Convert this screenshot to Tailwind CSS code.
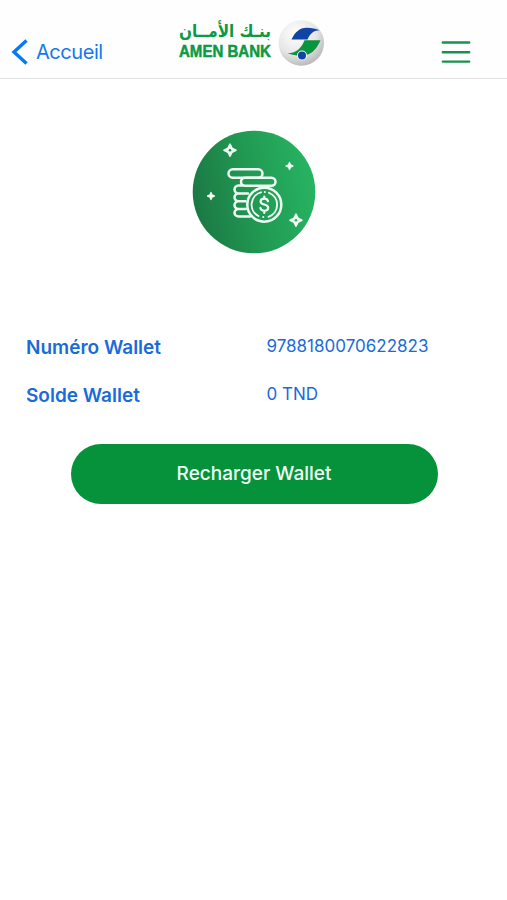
<!DOCTYPE html>
<html lang="fr">
<head>
    <meta charset="UTF-8">
    <meta name="viewport" content="width=device-width, initial-scale=1.0">
    <title>Amen Bank - Wallet</title>
    <script src="https://cdn.jsdelivr.net/npm/@tailwindcss/browser@4"></script>
</head>
<body class="bg-white font-['Inter',sans-serif] min-h-screen">
    <header class="flex h-[79px] border-b border-[#e2e2e2] bg-[#fefefe]">
        <a href="#" class="flex items-center w-[176px] pl-[11px] pt-[25px] gap-[7px] text-[#1479ee]">
            <svg class="w-[18px] h-[28px] shrink-0" viewBox="0 0 18 28" fill="none" stroke="#0878f5" stroke-width="3.400">
                <path d="M15.500 2.500 3 14l12.500 11.500" />
            </svg>
            <span class="text-[20px] leading-6 tracking-[-0.45px]">Accueil</span>
        </a>
        <svg class="w-[152px] h-[54px] mt-4 shrink-0" viewBox="0 0 152 54">
            <defs>
                <radialGradient id="globe" cx=".38" cy=".3" r=".75">
                    <stop offset="0" stop-color="#fff" />
                    <stop offset=".6" stop-color="#e6e6e6" />
                    <stop offset="1" stop-color="#b5b5b5" />
                </radialGradient>
            </defs>
            <text x="95" y="21" direction="rtl" textLength="92" lengthAdjust="spacingAndGlyphs" font-family="DejaVu Sans" font-weight="700" font-size="17.500" fill="#0b9a43">بنـك الأمــان</text>
            <text x="3" y="40.500" textLength="92" lengthAdjust="spacingAndGlyphs" font-family="Liberation Sans" font-weight="700" font-size="16.500" fill="#0b9a43" stroke="#0b9a43" stroke-width=".5">AMEN BANK</text>
            <circle cx="125.300" cy="27" r="22.700" fill="url(#globe)" />
            <path d="M115.500 23.500C119 16 124 11.500 131 11.800c5 .1 9 .9 12.500 2.400C137 14.500 134 18 131.500 23.500z" fill="#1145a5" />
            <path d="M128.500 24.200H144.500C142 30 138.500 35.500 133 38c-6 2.500-14 1.800-21.500-.5C121 36.500 125.500 32 128.500 24.200z" fill="#0b9440" />
            <circle cx="126" cy="39.500" r="5" fill="#f5f5f5" />
            <circle cx="126" cy="39.500" r="4" fill="#1145a5" />
        </svg>
        <button class="ml-auto mr-[36px] mt-[40px] h-[24px] w-[30px]">
            <svg class="w-[30px] h-[24px]" viewBox="0 0 30 24" stroke="#16924c" stroke-width="2.400" stroke-linecap="round">
                <path d="M1.800 2.500h26.400M1.800 12.200h26.400M1.800 21.600h26.400" />
            </svg>
        </button>
    </header>

    <main>
        <svg class="w-[124px] h-[124px] mt-[51px] mx-auto" viewBox="0 0 124 124">
            <defs>
                <linearGradient id="badge" x1="0" y1=".6" x2="1" y2=".4">
                    <stop offset="0" stop-color="#1b7843" />
                    <stop offset=".5" stop-color="#219a53" />
                    <stop offset="1" stop-color="#27b462" />
                </linearGradient>
            </defs>
            <circle cx="62" cy="62" r="61.300" fill="url(#badge)" />
            <g fill="none" stroke="#eefcf3" stroke-width="2.500" stroke-linecap="round" stroke-linejoin="round">
                <rect x="36.500" y="39.300" width="34" height="8.400" rx="4.200" />
                <rect x="49" y="47.700" width="34.500" height="8" rx="4" />
                <path d="M50 55.500H46.500a4 4 0 0 0-4 4 4 4 0 0 0 4 3.900H56M46.500 63.400a4 4 0 0 0-4 3.900 4 4 0 0 0 4 3.900H53.500M46.500 71.200a4 4 0 0 0-4 3.900 4 4 0 0 0 4 3.900H54M46.500 79a4 4 0 0 0-4 3.800 4 4 0 0 0 4 3.700H58" />
                <circle cx="72.300" cy="74.700" r="17" />
                <path d="M69 62.300A12.800 12.800 0 0 0 66.500 86M77 62.800A12.800 12.800 0 0 1 76.500 86.800" stroke-width="1.900" />
                <path d="M76 71.200c-.4-1.700-1.700-2.600-3.700-2.600-2.200 0-3.700 1-3.700 2.800 0 4.100 7.600 2.200 7.600 6.400 0 1.900-1.600 3-3.900 3-2.200 0-3.600-1-3.900-2.900M72.300 66.500v2M72.300 80.800v2.100" stroke-width="2.200" />
                <path d="M71.200 86.900h.1M72.800 62h.1" stroke-width="2" />
            </g>
            <g fill="#eefcf3" stroke="#eefcf3" stroke-width="1.600" stroke-linejoin="round">
                <path d="M38 14.200 40 18.200 44 20.200 40 22.200 38 26.200 36 22.200 32 20.200 36 18.200z" />
                <path d="M104 84.200 106 88.200 110 90.200 106 92.200 104 96.200 102 92.200 98 90.200 102 88.200z" />
                <path d="M97.500 32.700 98.400 35.100 100.800 36 98.400 36.900 97.500 39.300 96.600 36.900 94.200 36 96.600 35.100z" />
                <path d="M19 62.700 19.900 65.100 22.300 66 19.900 66.900 19 69.300 18.100 66.900 15.700 66 18.100 65.100z" />
            </g>
            <circle cx="38" cy="20.200" r="1.300" fill="#218b4d" />
            <circle cx="104" cy="90.200" r="1.300" fill="#25a85b" />
        </svg>

        <dl class="grid grid-cols-[240.5px_1fr] gap-y-6 mt-[82px] pl-[26px] text-[#1a6bda]">
            <dt class="text-[19px] leading-6 font-semibold">Numéro Wallet</dt>
            <dd class="text-[17px] leading-5">9788180070622823</dd>
            <dt class="text-[19px] leading-6 font-semibold">Solde Wallet</dt>
            <dd class="text-[17px] leading-5">0 TND</dd>
        </dl>

        <button class="flex items-center justify-center w-[367px] h-[60px] mt-[36px] ml-[70.5px] pt-px rounded-full bg-[#05923b] text-[#f0fff5] text-[19px] font-medium">Recharger Wallet</button>
    </main>
</body>
</html>
